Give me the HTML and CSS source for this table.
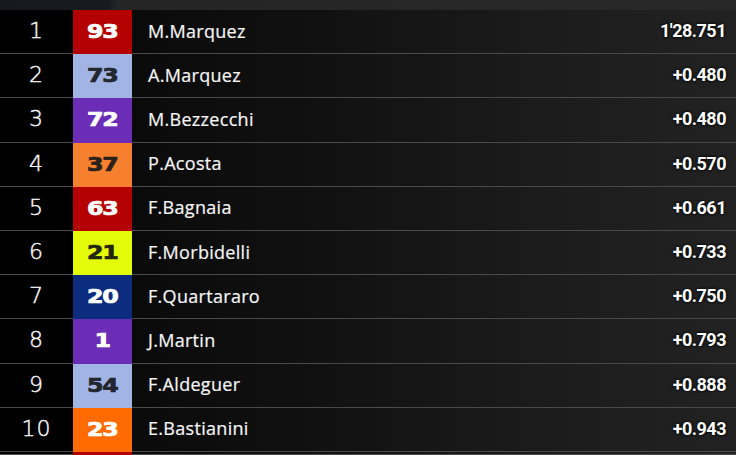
FILE: index.html
```html
<!DOCTYPE html>
<html>
<head>
<meta charset="utf-8">
<link rel="stylesheet" href="styles.css">
</head>
<body>
<div class="board">
  <div class="top"></div>
  <div class="row"><div class="pos">1</div><div class="num red"><span>93</span></div><div class="main"><span class="name">M.Marquez</span><span class="time">1'28.751</span></div></div>
  <div class="row"><div class="pos">2</div><div class="num blue"><span>73</span></div><div class="main"><span class="name">A.Marquez</span><span class="time">+0.480</span></div></div>
  <div class="row"><div class="pos">3</div><div class="num purple"><span>72</span></div><div class="main"><span class="name">M.Bezzecchi</span><span class="time">+0.480</span></div></div>
  <div class="row"><div class="pos">4</div><div class="num orange"><span>37</span></div><div class="main"><span class="name">P.Acosta</span><span class="time">+0.570</span></div></div>
  <div class="row"><div class="pos">5</div><div class="num red"><span>63</span></div><div class="main"><span class="name">F.Bagnaia</span><span class="time">+0.661</span></div></div>
  <div class="row"><div class="pos">6</div><div class="num yellow"><span>21</span></div><div class="main"><span class="name">F.Morbidelli</span><span class="time">+0.733</span></div></div>
  <div class="row"><div class="pos">7</div><div class="num navy"><span>20</span></div><div class="main"><span class="name">F.Quartararo</span><span class="time">+0.750</span></div></div>
  <div class="row"><div class="pos">8</div><div class="num purple"><span>1</span></div><div class="main"><span class="name">J.Martin</span><span class="time">+0.793</span></div></div>
  <div class="row"><div class="pos">9</div><div class="num blue"><span>54</span></div><div class="main"><span class="name">F.Aldeguer</span><span class="time">+0.888</span></div></div>
  <div class="row"><div class="pos">10</div><div class="num orange2"><span>23</span></div><div class="main"><span class="name">E.Bastianini</span><span class="time">+0.943</span></div></div>
  <div class="row last"><div class="pos"></div><div class="num red"><span></span></div><div class="main"></div></div>
</div>
</body>
</html>
```
FILE: styles.css
```css
html, body {
  margin: 0;
  padding: 0;
  background: #000;
  width: 736px;
  height: 455px;
  overflow: hidden;
}
.board {
  display: flex;
  flex-direction: column;
  height: 455px;
  overflow: hidden;
}
.top {
  height: 10px;
  flex: none;
  background: linear-gradient(90deg, #161a1f 0px, #171b20 108px, #252525 118px, #282828 100%);
}
.row {
  display: grid;
  grid-template-columns: 73px 59px 1fr;
  height: 44.2px;
  flex: none;
}
.row.last {
  height: 3px;
}
.pos {
  background: #000;
  border-bottom: 1px solid #4a4a4a;
  color: #fafafa;
  font-family: "DejaVu Sans", sans-serif;
  font-weight: 200;
  font-size: 22px;
  letter-spacing: 1px;
  display: flex;
  align-items: center;
  justify-content: center;
  padding-bottom: 2px;
  box-sizing: border-box;
  -webkit-text-stroke: 0.4px #fafafa;
}
.num {
  display: flex;
  align-items: center;
  justify-content: center;
  padding-bottom: 2px;
  box-sizing: border-box;
}
.num span {
  display: inline-block;
  font-family: "DejaVu Sans", sans-serif;
  font-weight: 700;
  font-size: 19px;
  transform: scaleX(1.25);
  letter-spacing: -1px;
  -webkit-text-stroke: 0.7px currentColor;
}
.red { background: #b40000; color: #fff; }
.blue { background: #a2b4e3; color: #22262e; }
.purple { background: #6c2db6; color: #fff; }
.orange { background: #f7802f; color: #2a211a; }
.orange2 { background: #ff6b00; color: #fff; }
.yellow { background: #e3fb08; color: #24260a; }
.navy { background: #0c2c80; color: #fff; }
.main {
  background: linear-gradient(90deg, #0a0a0a 0%, #121212 35%, #1c1c1c 70%, #222 100%);
  border-bottom: 1px solid #4a4a4a;
  display: flex;
  align-items: center;
  justify-content: space-between;
  padding: 0 10px 2px 16px;
  box-sizing: border-box;
}
.name {
  color: #f6f6f6;
  font-family: "Open Sans", sans-serif;
  font-size: 18px;
  letter-spacing: 0.3px;
  -webkit-text-stroke: 0.2px #f6f6f6;
}
.time {
  color: #fff;
  font-family: Roboto, sans-serif;
  font-weight: 700;
  font-size: 18px;
  letter-spacing: -0.5px;
  text-shadow: 0 0 3px #000, 0 0 2px #000;
}
```
